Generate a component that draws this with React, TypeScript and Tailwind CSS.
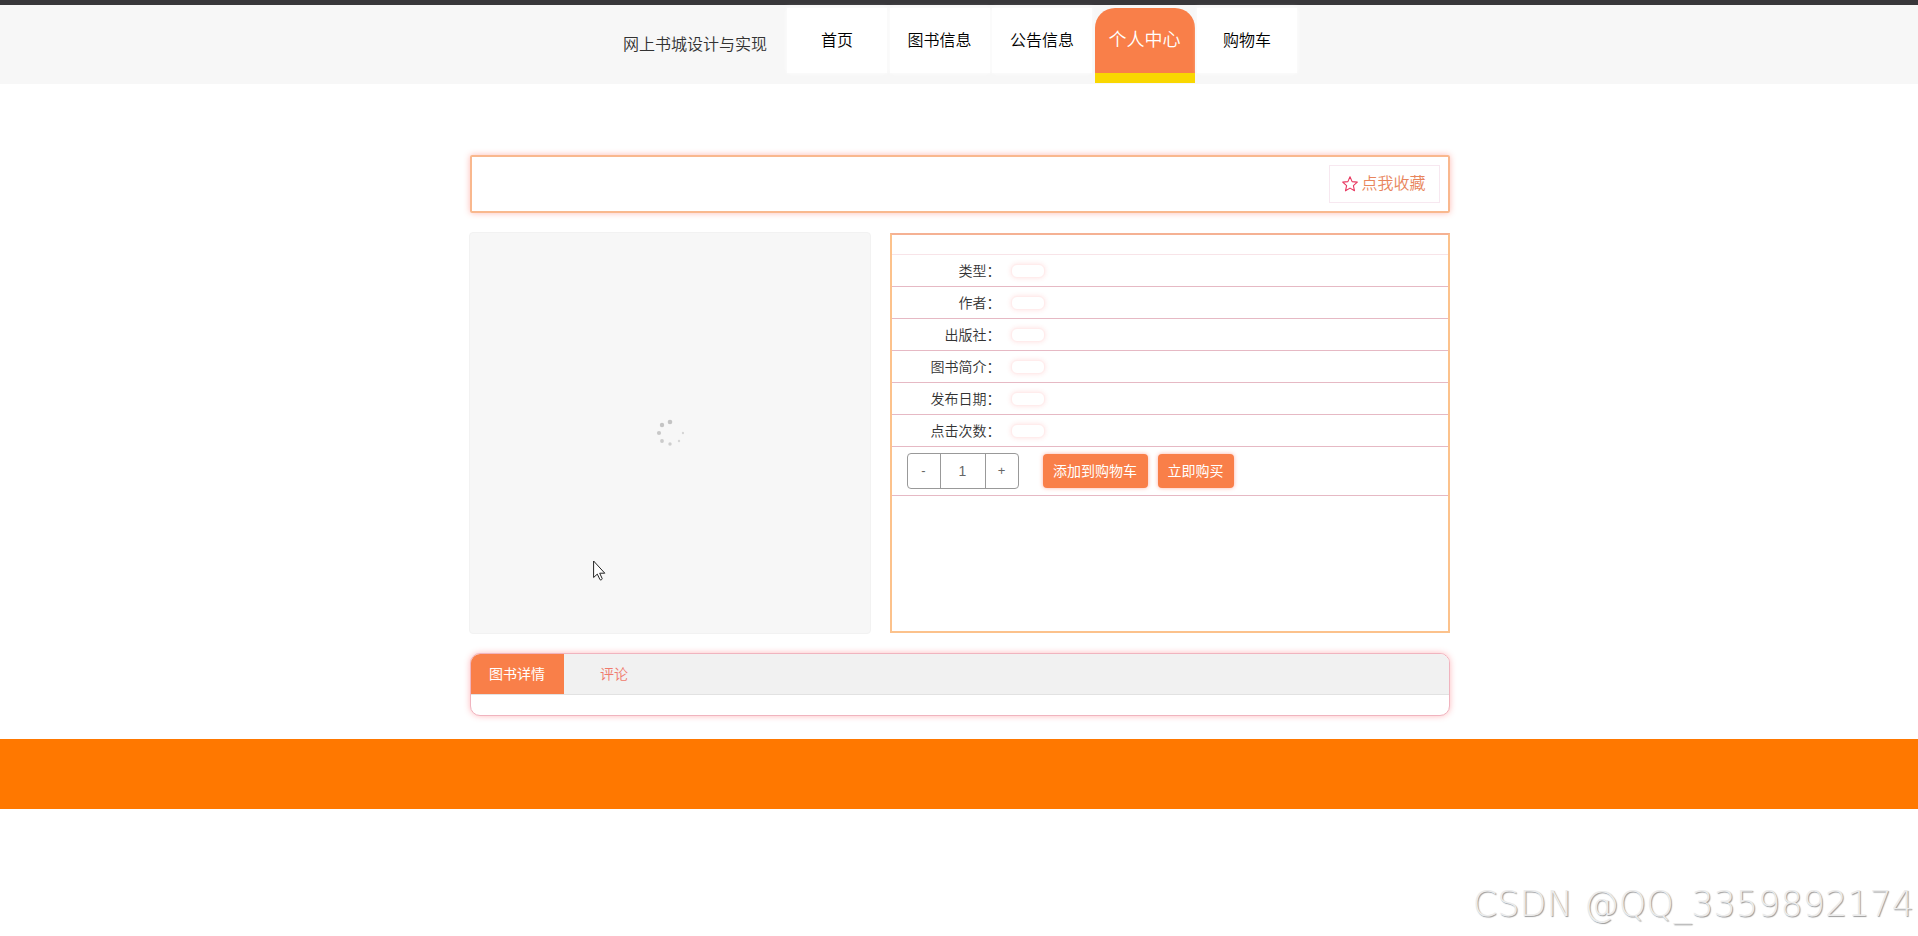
import React, { useState } from 'react';

const MENU: { id: string; label: string }[] = [
  { id: 'home', label: '首页' },
  { id: 'books', label: '图书信息' },
  { id: 'news', label: '公告信息' },
  { id: 'center', label: '个人中心' },
  { id: 'cart', label: '购物车' },
];

const FIELDS = ['类型', '作者', '出版社', '图书简介', '发布日期', '点击次数'];

const TABS = ['图书详情', '评论'];

// spinner dots, fading clockwise
const DOTS = [
  { x: 14, y: 3, r: 2.3, c: '#c4c4c4' },
  { x: 6, y: 6, r: 2.2, c: '#c4c4c4' },
  { x: 3, y: 14, r: 2.1, c: '#c8c8c8' },
  { x: 6, y: 22, r: 1.9, c: '#cbcbcb' },
  { x: 14, y: 25, r: 1.7, c: '#cecece' },
  { x: 23, y: 22, r: 1.2, c: '#d6d6d6' },
  { x: 27, y: 14, r: 1.2, c: '#d6d6d6' },
];

const Header: React.FC = () => (
  <header className="border-t-5 border-[#38373a] bg-[#f7f7f7] h-[84px] flex justify-center pl-0.5">
    <div className="text-base leading-6 text-[#333] font-[350] mt-7 mr-5">网上书城设计与实现</div>
    <nav className="flex justify-between w-[510px] h-[68px] mt-[3px]">
      {MENU.map(m =>
        m.id === 'center' ? (
          <a
            key={m.id}
            href="#center"
            className="w-[100px] h-[75px] rounded-t-[20px] bg-[#f97f49] border-b-[10px] border-[#f9d700] text-white text-lg leading-[64px] text-center font-[350]"
          >
            {m.label}
          </a>
        ) : (
          <a
            key={m.id}
            href={`#${m.id}`}
            className="w-[100px] h-[65px] bg-white text-black text-base leading-[65px] text-center font-[350] shadow-[0_0_4px_#fff]"
          >
            {m.label}
          </a>
        ),
      )}
    </nav>
  </header>
);

const Cover: React.FC = () => (
  <div className="w-[402px] h-[402px] bg-[#f7f7f7] border border-[#f2f2f2] rounded flex items-center justify-center">
    <svg width="28" height="28" viewBox="0 0 28 28">
      {DOTS.map(d => (
        <circle key={`${d.x}-${d.y}`} cx={d.x} cy={d.y} r={d.r} fill={d.c} />
      ))}
    </svg>
  </div>
);

const BookInfo: React.FC = () => {
  const [count, setCount] = useState('1');
  const step = (n: number) => setCount(String(Math.max(1, Number(count) + n)));

  return (
    <section className="w-[560px] h-[400px] mt-px border-2 border-[#fcc28c] border-t-[#f5b193]">
      <div className="h-5 border-b border-[#f8e4e8]" />
      <dl>
        {FIELDS.map(f => (
          <div key={f} className="flex items-center h-8 border-b border-[#e6b9c4]">
            <dt className="w-[109px] text-right text-sm leading-5 text-[#333] font-[350]">{f}：</dt>
            <dd className="ml-2.5 w-[34px] h-3.5 rounded-md bg-white border border-[#ffecec] shadow-[0_0_5px_rgba(255,60,60,0.16)]" />
          </div>
        ))}
      </dl>
      <div className="flex items-center h-[49px] pl-[15px] border-b border-[#e6b9c4]">
        <div className="flex h-9 w-[112px] border border-[#999] rounded text-[13px] text-[#666]">
          <button type="button" aria-label="减少" onClick={() => step(-1)} className="w-8">-</button>
          <input
            aria-label="数量"
            value={count}
            onChange={e => setCount(e.target.value)}
            className="w-[46px] border-x border-[#999] text-center text-sm outline-none"
          />
          <button type="button" aria-label="增加" onClick={() => step(1)} className="flex-1">+</button>
        </div>
        <button type="button" className="ml-6 w-[105px] h-[34px] rounded bg-[#f97f49] text-white text-sm shadow-[0_0_4px_rgba(255,60,30,0.4)]">
          添加到购物车
        </button>
        <button type="button" className="ml-2.5 w-[76px] h-[34px] rounded bg-[#f97f49] text-white text-sm shadow-[0_0_4px_rgba(255,60,30,0.4)]">
          立即购买
        </button>
      </div>
    </section>
  );
};

const DetailTabs: React.FC = () => {
  const [active, setActive] = useState(TABS[0]);

  return (
    <section className="mt-[19px] ml-px h-[63px] rounded-[10px] border border-[#f0b4bf] bg-white overflow-hidden shadow-[0_0_6px_rgba(255,60,70,0.35)]">
      <div className="flex gap-1 h-[41px] bg-[#f1f1f1] border-b border-[#e2e2e2]">
        {TABS.map(t => (
          <button
            key={t}
            type="button"
            onClick={() => setActive(t)}
            className={`w-[93px] h-10 text-sm ${active === t ? 'bg-[#f97f49] text-white' : 'text-[#f07a6c] font-[350]'}`}
          >
            {t}
          </button>
        ))}
      </div>
    </section>
  );
};

const App: React.FC = () => (
  <div className="relative min-h-screen bg-white font-['Liberation_Sans','Noto_Sans_CJK_SC',sans-serif]">
    <Header />
    <main className="w-[981px] mx-auto pt-[71px]">
      <div className="ml-px h-[58px] pr-2 flex items-center justify-end border-2 border-[#f9b88e] rounded-xs shadow-[0_0_6px_rgba(255,60,40,0.35)]">
        <button type="button" className="flex items-center justify-center gap-[3px] w-[111px] h-[38px] border border-[#f7e8f0] text-base text-[#e8855c] font-[350]">
          <svg width="16" height="16" viewBox="0 0 16 16" fill="none" stroke="#e8365f" strokeWidth="1.1" strokeLinejoin="round">
            <path d="M8 .8 10.1 5.6 15.3 6.1 11.4 9.6 12.5 14.8 8 12.1 3.5 14.8 4.6 9.6 .7 6.1 5.9 5.6Z" />
          </svg>
          点我收藏
        </button>
      </div>
      <div className="flex justify-between mt-[19px]">
        <Cover />
        <BookInfo />
      </div>
      <DetailTabs />
    </main>
    <footer className="mt-[23px] h-[70px] bg-[#ff7800]" />
    <svg className="absolute left-[593px] top-[560px]" width="13" height="21" viewBox="0 0 13 21">
      <path d="M.6 1v16.5l3.7-3.4 2.7 5.6c.6.6 2.4-.2 2.2-1.1l-2.5-5.4h5.1Z" fill="#fff" stroke="#222" strokeWidth="1" strokeLinejoin="round" />
    </svg>
    <div className="absolute right-1 bottom-2 text-[35px] leading-[48px] font-extralight font-['DejaVu_Sans',sans-serif] text-[#ececec] [text-shadow:1px_1px_1px_#999]">
      CSDN @QQ_3359892174
    </div>
  </div>
);

export default App;
